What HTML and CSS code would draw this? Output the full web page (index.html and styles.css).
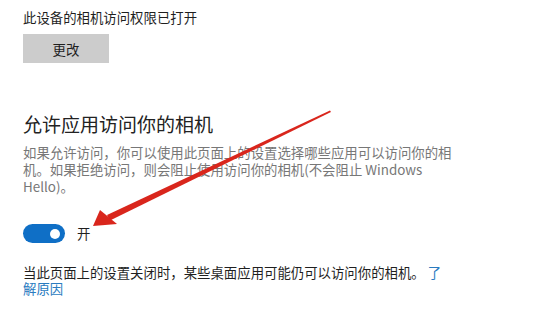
FILE: index.html
```html
<!DOCTYPE html>
<html lang="zh-CN">
<head>
<meta charset="utf-8">
<link rel="stylesheet" href="styles.css">
</head>
<body>
<main class="page">
  <p class="status">此设备的相机访问权限已打开</p>
  <button class="change-btn">更改</button>

  <h2 class="heading">允许应用访问你的相机</h2>
  <p class="desc">如果允许访问，你可以使用此页面上的设置选择哪些应用可以访问你的相机。如果拒绝访问，则会阻止使用访问你的相机(不会阻止 Windows Hello)。</p>

  <div class="toggle-row">
    <span class="toggle"><span class="knob"></span></span>
    <span class="toggle-label">开</span>
  </div>

  <p class="note">当此页面上的设置关闭时，某些桌面应用可能仍可以访问你的相机。 <a class="link" href="#">了解原因</a></p>

  <svg class="arrow" width="550" height="328" viewBox="0 0 550 328">
    <defs>
      <filter id="sh" x="-10%" y="-10%" width="120%" height="120%">
        <feGaussianBlur stdDeviation="0.6"/>
      </filter>
    </defs>
    <g filter="url(#sh)">
      <polygon points="330,110.5 331,112 110,220.5 107,215" fill="#d9251c"/>
      <polygon points="93,226 100,210 117,224" fill="#d9251c"/>
    </g>
  </svg>
</main>
</body>
</html>
```
FILE: styles.css
```css
html, body {
  margin: 0;
  padding: 0;
  background: #ffffff;
}

.page {
  position: relative;
  width: 550px;
  height: 328px;
  overflow: hidden;
  padding: 0 0 0 23px;
  box-sizing: border-box;
  font-family: "Noto Sans CJK SC", "Noto Sans", sans-serif;
  color: #1f1f1f;
}

.status {
  margin: 0;
  padding-top: 7px;
  font-size: 13.4px;
  line-height: 20px;
}

.change-btn {
  display: block;
  margin-top: 7px;
  width: 86px;
  height: 29px;
  border: none;
  background: #cccccc;
  font-family: inherit;
  font-size: 13.4px;
  color: #1f1f1f;
  padding: 0;
}

.heading {
  margin: 0;
  margin-top: 48px;
  font-size: 19px;
  font-weight: 400;
  line-height: 26px;
  color: #222;
}

.desc {
  margin: 7px 0 0 0;
  max-width: 440px;
  font-size: 13.4px;
  line-height: 17px;
  color: #777;
}

.toggle-row {
  display: flex;
  align-items: center;
  gap: 12px;
  margin-top: 29px;
}

.toggle {
  display: flex;
  align-items: center;
  justify-content: flex-end;
  width: 42px;
  height: 19px;
  border-radius: 10px;
  background: #0f6fc6;
  padding-right: 5px;
  box-sizing: border-box;
}

.knob {
  width: 10px;
  height: 10px;
  border-radius: 50%;
  background: #fff;
}

.toggle-label {
  font-size: 13.4px;
  line-height: 19px;
}

.note {
  margin: 21px 0 0 0;
  max-width: 420px;
  font-size: 13.4px;
  line-height: 16px;
  color: #1f1f1f;
}

.link {
  color: #2a7bbf;
  text-decoration: none;
}

.arrow {
  position: absolute;
  left: 0;
  top: 0;
  pointer-events: none;
}
```
